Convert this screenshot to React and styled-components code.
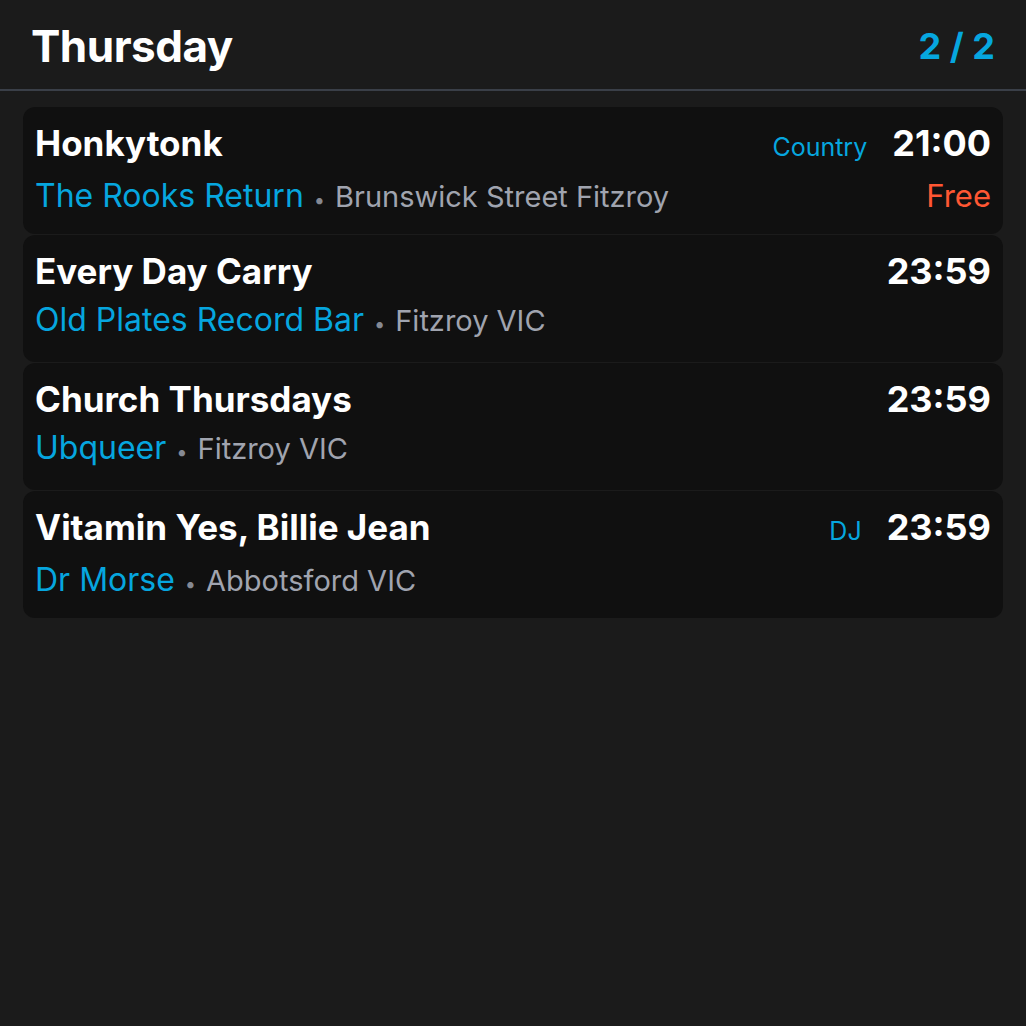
import styled, { createGlobalStyle } from 'styled-components';

const events = [
    { title: 'Honkytonk', venue: 'The Rooks Return', place: 'Brunswick Street Fitzroy', genre: 'Country', time: '21:00', price: 'Free' },
    { title: 'Every Day Carry', venue: 'Old Plates Record Bar', place: 'Fitzroy VIC', time: '23:59' },
    { title: 'Church Thursdays', venue: 'Ubqueer', place: 'Fitzroy VIC', time: '23:59' },
    { title: 'Vitamin Yes, Billie Jean', venue: 'Dr Morse', place: 'Abbotsford VIC', genre: 'DJ', time: '23:59' },
];

const App = () => {
    return (
        <Page>
            <GlobalStyle />
            <Header>
                <Day>Thursday</Day>
                <PageCount>2 / 2</PageCount>
            </Header>
            <List>
                {events.map((ev) => (
                    <Card key={ev.title}>
                        <Row>
                            <Title>{ev.title}</Title>
                            <Right>
                                {ev.genre && <Genre>{ev.genre}</Genre>}
                                <Time>{ev.time}</Time>
                            </Right>
                        </Row>
                        <SubRow>
                            <Where>
                                <Venue>{ev.venue}</Venue>
                                <Dot>•</Dot>
                                <Place>{ev.place}</Place>
                            </Where>
                            {ev.price && <Price>{ev.price}</Price>}
                        </SubRow>
                    </Card>
                ))}
            </List>
        </Page>
    );
}
export default App;

const GlobalStyle = createGlobalStyle`
    html, body {
        margin: 0;
        background: #1b1b1b;
    }
    body {
        font-family: Inter, "Noto Sans", sans-serif;
        color: #fff;
    }
`;
const Page = styled.div`
    width: 1026px;
    height: 1026px;
    background: #1b1b1b;
`;
const Header = styled.div`
    display: flex;
    justify-content: space-between;
    align-items: center;
    height: 91px;
    padding: 2px 31px 0 31px;
    box-sizing: border-box;
    border-bottom: 2px solid #3a3f48;
`;
const Day = styled.h1`
    margin: 0;
    font-size: 44px;
    font-weight: 700;
    letter-spacing: -0.5px;
    color: #fff;
`;
const PageCount = styled.div`
    font-size: 36px;
    font-weight: 700;
    color: #06a6df;
`;
const List = styled.div`
    display: flex;
    flex-direction: column;
    gap: 1px;
    padding: 16px 23px;
`;
const Card = styled.div`
    height: 127px;
    box-sizing: border-box;
    padding: 14px 12px 0;
    background: #101010;
    border-radius: 12px;
`;
const Row = styled.div`
    display: flex;
    justify-content: space-between;
    align-items: baseline;
    line-height: 44px;
`;
const Title = styled.div`
    font-size: 35px;
    font-weight: 700;
`;
const Right = styled.div`
    display: flex;
    align-items: baseline;
    gap: 25px;
`;
const Genre = styled.span`
    font-size: 25px;
    color: #06a6df;
`;
const Time = styled.span`
    font-size: 36px;
    font-weight: 700;
`;
const SubRow = styled(Row)`
    margin-top: 5px;
`;
const Where = styled.div`
    display: flex;
    align-items: baseline;
`;
const Venue = styled.span`
    font-size: 32px;
    color: #06a6df;
`;
const Dot = styled.span`
    font-size: 20px;
    color: #858993;
    margin: 0 10px;
`;
const Place = styled.span`
    font-size: 29px;
    color: #a0a4af;
`;
const Price = styled.span`
    font-size: 31px;
    color: #ff5733;
`;
